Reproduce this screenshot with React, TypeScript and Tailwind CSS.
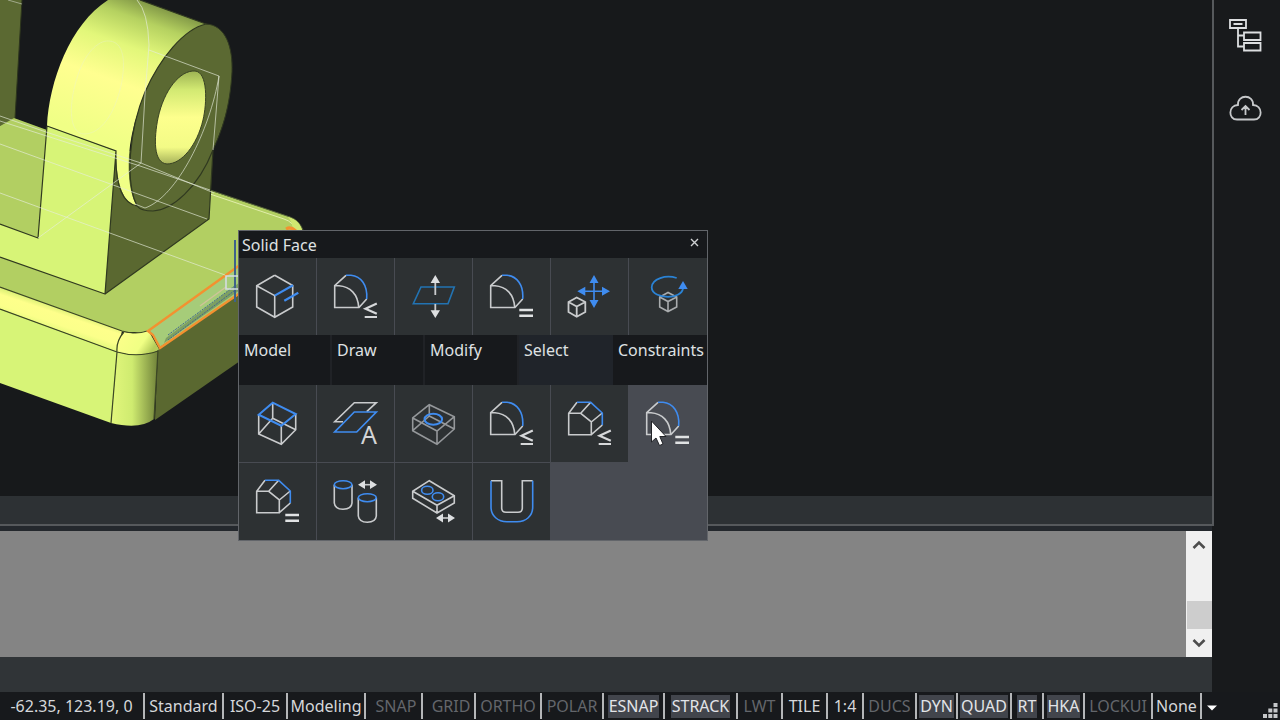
import type { ReactNode } from "react";

const BLUE = "#3f8cf0";
const GREY = "#c9cbcd";

function Icon({ children }: { children: ReactNode }) {
  return (
    <svg viewBox="0 0 76 76" className="size-[76px]" fill="none" stroke={GREY} strokeWidth="1.6" aria-hidden="true">
      {children}
    </svg>
  );
}

const LessEqual = () => <path d="M59.8 45.5 48.5 50.7 59.8 55.8M47.7 59H60" strokeWidth="2.2" stroke="#d6d8da" />;
const Equal = () => <path d="M46.3 52H60M46.3 57.8H60" strokeWidth="2.6" stroke="#e0e2e3" />;

function Fillet({ children }: { children?: ReactNode }) {
  return (
    <Icon>
      <path d="M29 17.3 17.7 27.7V49.5H42L49.7 41M17.7 27.7H22C33 28.5 41 36 41.7 49.5" />
      <path d="M29 17.3H34C44 18.3 50.8 27 49.7 41" stroke={BLUE} />
      {children}
    </Icon>
  );
}

function Chamfer({ children }: { children?: ReactNode }) {
  return (
    <Icon>
      <path d="M26 17.3 17.7 28.3V49.7H40.3V37L29.7 28.3H17.7M29.7 28.3 39.7 17.3M40.3 37 51.3 28M40.3 49.7 51.3 40" />
      <path d="M26 17.3H39.7L51.3 28V40" stroke={BLUE} />
      {children}
    </Icon>
  );
}

const topTools = [
  {
    name: "Select edge",
    icon: (
      <Icon>
        <path d="M35.7 17.3 17.7 27.7V49L35.7 59.3 53.7 49V27.5L35.7 17.3M17.7 27.7 35.7 37.6V59.3" />
        <path d="M35.7 37.6 54 27.2M45.3 42.7 59.3 34.8" stroke={BLUE} strokeWidth="2.2" />
      </Icon>
    ),
  },
  { name: "Fillets up to radius", icon: <Fillet><LessEqual /></Fillet> },
  {
    name: "Push and pull face",
    icon: (
      <Icon>
        <path d="M26 29H59.3L53 45.7H18.3Z" stroke="#2273b2" />
        <path d="M40.3 24V37M40.3 46V53" strokeWidth="1.8" />
        <path d="M40.3 17 45 25H35.6ZM40.3 60 45 52.3H35.6Z" fill="#dddfe1" stroke="none" />
      </Icon>
    ),
  },
  { name: "Fillets of equal radius", icon: <Fillet><Equal /></Fillet> },
  {
    name: "Move",
    icon: (
      <Icon>
        <path d="M25.7 39.5 17.5 44V54L25.7 58.7 34.3 54V44ZM17.5 44 25.7 48.5 34.3 44M25.7 48.5V58.7" strokeWidth="1.8" />
        <path d="M43 23V44M32 33.3H53" stroke={BLUE} strokeWidth="1.6" />
        <path d="M43 17 47.5 25H38.5ZM43 50 47.5 42H38.5ZM26.3 33.3 34.3 28.8V37.8ZM59 33.3 51 28.8V37.8Z" fill={BLUE} stroke="none" />
      </Icon>
    ),
  },
  {
    name: "Rotate",
    icon: (
      <Icon>
        <path d="M39 34.5 30.7 39V49L39 53.5 47.7 49V39ZM30.7 39 39 43.5 47.7 39M39 43.5V53.5" stroke="#a9acae" />
        <path d="M47.7 20C37 16.5 23 20.5 22.7 29.3C22.8 36 31 38.8 39 38.8C46 38.8 53 36 54 30.5" stroke="#2a82d4" strokeWidth="1.8" />
        <path d="M54 23 58.7 31H49.3Z" fill={BLUE} stroke="none" />
      </Icon>
    ),
  },
];

const tabs = [
  { label: "Model", width: "w-[93px]" },
  { label: "Draw", width: "w-[93px]" },
  { label: "Modify", width: "w-[94px]" },
  { label: "Select", width: "w-[94px]" },
  { label: "Constraints", width: "flex-1" },
];

const selectTools = [
  {
    name: "Box faces",
    icon: (
      <Icon>
        <path d="M33.7 17.7V33.3L19.7 49M33.7 33.3 56.7 44.7M19.7 29.7V49L42.3 59.3 56.7 44.7V29M42.3 40.7V59.3" />
        <path d="M33.7 17.7 19.7 29.7 42.3 40.7 56.7 29Z" stroke={BLUE} strokeWidth="2" />
      </Icon>
    ),
  },
  {
    name: "Aligned faces",
    icon: (
      <Icon>
        <path d="M26 36.7H17.7L37.3 17.7H59.3L49.7 26.7" />
        <path d="M37.3 27H59.3L39.7 47H17.7Z" stroke={BLUE} strokeWidth="1.7" />
        <text x="44" y="59.3" fontSize="25" fill="#d3d5d7" stroke="none" fontFamily="'Noto Sans', sans-serif">A</text>
      </Icon>
    ),
  },
  {
    name: "Holes",
    icon: (
      <Icon>
        <path d="M34.3 19.7 17.7 33V45.7L42 59.3 59.3 44V31.7ZM17.7 33 42 46 59.3 31.7M42 46V59.3M34.3 19.7V31L17.7 45.7M34.3 31 59.3 44" stroke="#94979a" />
        <ellipse cx="38.3" cy="34.3" rx="8.8" ry="5.5" stroke={BLUE} strokeWidth="2" />
      </Icon>
    ),
  },
  { name: "Fillets up to radius", icon: <Fillet><LessEqual /></Fillet> },
  { name: "Chamfers up to size", icon: <Chamfer><LessEqual /></Chamfer> },
  { name: "Fillets of equal radius", icon: <Fillet><Equal /></Fillet>, hovered: true },
  { name: "Chamfers of equal size", icon: <Chamfer><Equal /></Chamfer> },
  {
    name: "Similar bosses",
    icon: (
      <Icon>
        <path d="M17.3 21.7V40Q18 46 26 46.3Q34.5 46 35 40V21.7M41.3 34.7V53Q42 59 50.3 59.3Q58.8 59 59.3 53V34.7" />
        <ellipse cx="26.1" cy="21.7" rx="8.8" ry="4" stroke={BLUE} />
        <ellipse cx="50.3" cy="34.7" rx="9" ry="4" stroke={BLUE} />
        <path d="M45 21.7H56" />
        <path d="M41 21.7 48 17.3V26ZM60 21.7 53 17.3V26Z" fill="#dddfe1" stroke="none" />
      </Icon>
    ),
  },
  {
    name: "Similar holes",
    icon: (
      <Icon>
        <path d="M34.3 17.7 17.7 28.3V35.3L42 50 59.3 40V32.7ZM17.7 28.3 42 42.3 59.3 32.7M42 42.3V50" />
        <ellipse cx="32.3" cy="27.3" rx="5.7" ry="4" stroke={BLUE} />
        <ellipse cx="43" cy="33.7" rx="5.7" ry="4" stroke={BLUE} />
        <path d="M45 55H56" />
        <path d="M41 55 48 50.6V59.4ZM60 55 53 50.6V59.4Z" fill="#dddfe1" stroke="none" />
      </Icon>
    ),
  },
  {
    name: "Pockets",
    icon: (
      <Icon>
        <path d="M18 17.7H28.7V45Q28.7 49.3 33 49.3H45Q49.3 49.3 49.3 45V17.7H59.7" />
        <path d="M18 17.7V44C18 53 25 58.7 34 58.7H44C53 58.7 59.7 53 59.7 44V17.7" stroke={BLUE} />
      </Icon>
    ),
  },
];

type Mode = "text" | "off" | "on";

const statusItems: { label: string; mode: Mode; width: string }[] = [
  { label: "-62.35, 123.19, 0", mode: "text", width: "w-[145px]" },
  { label: "Standard", mode: "text", width: "w-[79px]" },
  { label: "ISO-25", mode: "text", width: "w-16" },
  { label: "Modeling", mode: "text", width: "w-[78px]" },
  { label: "SNAP", mode: "off", width: "w-[57px] pl-[5px]" },
  { label: "GRID", mode: "off", width: "w-[53px] pl-[5px]" },
  { label: "ORTHO", mode: "off", width: "w-[66px]" },
  { label: "POLAR", mode: "off", width: "w-[62px]" },
  { label: "ESNAP", mode: "on", width: "w-[61px]" },
  { label: "STRACK", mode: "on", width: "w-[73px]" },
  { label: "LWT", mode: "off", width: "w-[45px]" },
  { label: "TILE", mode: "text", width: "w-[45px]" },
  { label: "1:4", mode: "text", width: "w-9" },
  { label: "DUCS", mode: "off", width: "w-[53px]" },
  { label: "DYN", mode: "on", width: "w-[41px]" },
  { label: "QUAD", mode: "on", width: "w-[54px]" },
  { label: "RT", mode: "on", width: "w-8" },
  { label: "HKA", mode: "on", width: "w-[41px]" },
  { label: "LOCKUI", mode: "off", width: "w-[68px]" },
  { label: "None", mode: "text", width: "w-[49px]" },
];

const modeStyles: Record<Mode, string> = {
  text: "text-[#d5d7da]",
  off: "text-[#63666b]",
  on: "bg-[#42454c] text-[#e2e4e8]",
};

function Model() {
  return (
    <svg viewBox="0 0 310 440" className="h-[440px] w-[310px]" fill="none" role="img" aria-label="Solid bracket model">
      <defs>
        <linearGradient id="drum" gradientUnits="userSpaceOnUse" x1="172" y1="10" x2="124" y2="145">
          <stop offset="0" stopColor="#7f9545" />
          <stop offset=".14" stopColor="#b5d160" />
          <stop offset=".34" stopColor="#e2f77a" />
          <stop offset=".6" stopColor="#ffff90" />
          <stop offset="1" stopColor="#f0ff86" />
        </linearGradient>
        <linearGradient id="bore" x1="0" y1="0" x2="0" y2="1">
          <stop offset="0" stopColor="#9db353" />
          <stop offset=".2" stopColor="#d2e972" />
          <stop offset=".5" stopColor="#fdff8d" />
          <stop offset=".82" stopColor="#f3fb86" />
          <stop offset="1" stopColor="#a6b25a" />
        </linearGradient>
        <linearGradient id="bevel" gradientUnits="userSpaceOnUse" x1="62" y1="307" x2="54" y2="331">
          <stop offset="0" stopColor="#d3ec70" />
          <stop offset=".3" stopColor="#feff8b" />
          <stop offset=".7" stopColor="#fbff8a" />
          <stop offset="1" stopColor="#e4f97c" />
        </linearGradient>
        <linearGradient id="corner" x1="0" y1="0" x2="1" y2="0">
          <stop offset="0" stopColor="#e2f77c" />
          <stop offset=".45" stopColor="#cfeb70" />
          <stop offset="1" stopColor="#6f8139" />
        </linearGradient>
        <linearGradient id="ball" x1="0" y1="0" x2="1" y2=".4">
          <stop offset="0" stopColor="#feff8b" />
          <stop offset=".7" stopColor="#f0ff84" />
          <stop offset="1" stopColor="#b4cc5a" />
        </linearGradient>
      </defs>

      <path d="M0 0H22L15 118 0 126Z" fill="#5b6932" />
      <path d="M22 0 15 118" stroke="#2d351d" />
      <path d="M8 0 22 4" stroke="#cfd3c4" strokeOpacity=".6" />

      <path d="M0 126 14 118 47 130 209 190 290 217Q302 222 303 234L240 290 150 332 124 332 0 290Z" fill="#b2cf62" />
      <path d="M210 190 290 217Q299 220 303 230" stroke="#56643a" />
      <path d="M210 194 284 219Q294 222 296 232" stroke="#ecf5bd" strokeOpacity=".8" />
      <path d="M288 217Q301 220 303 234H294Q293 223 288 217Z" fill="#cfe771" />

      <path d="M158 350 240 294V361L155 420Z" fill="#5a6830" />
      <path d="M0 287 122 331 117 352 0 309Z" fill="url(#bevel)" />
      <path d="M0 309 117 352 111 423 0 383Z" fill="#d7f477" />
      <path d="M117 352Q138 358 158 351L154 419Q140 430 111 423Z" fill="url(#corner)" />
      <path d="M124 332Q136 335 148 330L159 349 158 351Q138 358 117 352Q117 340 124 332Z" fill="url(#ball)" />
      <path d="M0 287 122 331Q136 335 147 331M0 309 117 352Q138 358 158 351M124 332Q116 341 117 352L111 423M158 350 154 419" stroke="#3c4725" strokeWidth="1.2" />

      <path d="M150 331 240 264V294L160 347Z" fill="#a6cc79" />
      <path d="M166 338 240 282V290L164 343Z" fill="#7d9f62" />
      <path d="M168 335 236 285M168 340 238 288" stroke="#41688f" strokeWidth="1" strokeDasharray="2 1" />
      <path d="M200 306 226 287" stroke="#cfc39a" strokeWidth="1.5" />
      <path d="M240 265 148 331 153 335 160 348 240 293" stroke="#f39130" strokeWidth="2.4" />
      <path d="M286 229Q291 226 296 231" stroke="#f39130" strokeWidth="3" />

      <path d="M47 126 116 151 105 294 0 257V224L38 238Z" fill="#d7f477" />
      <path d="M116 151H213L209 219 105 294Z" fill="#5a6830" />
      <path d="M47 126C49 82 70 24 108 0H140L206 24C160 60 134 100 129 155Q127 190 137 206C124 204 116 185 116 151Z" fill="url(#drum)" />
      <path d="M206 24C226 25 233 48 232 72C230 108 222 130 211 154C198 188 172 211 153 211Q141 211 137 206C125 182 129 130 145 92C160 58 184 29 206 24Z" fill="#5b6932" />
      <path d="M195 71C208 72 207 103 203 120C197 145 182 164 167 164C153 163 154 138 158 118C164 90 180 70 195 71Z" fill="url(#bore)" stroke="#3a4424" />
      <path d="M47 126 116 151 105 294 0 257M47 126 38 238 0 224M116 151C115 184 122 203 137 206M140 0 206 24C184 29 160 58 145 92C129 130 125 182 137 206Q141 211 153 211C172 210 198 188 213 150L209 219 105 294" stroke="#303920" strokeWidth="1.2" />
      <path d="M206 24C226 25 233 48 232 72C230 108 222 130 213 150" stroke="#303920" />

      <g stroke="#e7eddb" strokeOpacity=".65">
        <path d="M137 0Q148 12 149 45L145 95 141 163 38 238" />
        <path d="M149 50 219 76 213 150M219 76C210 130 177 197 145 208L135 204" />
        <path d="M0 116 46 132 141 163 214 193M0 121 140 166 210 190M0 144 207 219M0 193 225 275" />
        <path d="M109 41C127 42 125 70 120 90C112 120 98 134 84 134C68 133 69 103 77 78C84 54 98 40 109 41Z" strokeOpacity=".35" />
      </g>
      <path d="M235 240V302" stroke="#3e628b" strokeWidth="2" />
      <path d="M240 276H226V289H240" stroke="#d4dce1" strokeWidth="1.6" />
    </svg>
  );
}

function Palette() {
  return (
    <section aria-label="Solid Face" className="absolute top-[230px] left-[238px] w-[470px] border border-[#62656a] bg-[#17191c] text-base text-[#dfe1e3]">
      <header className="flex h-[27px] items-center justify-between pr-2 pl-[3px]">
        <h1>Solid Face</h1>
        <button type="button" aria-label="Close" className="flex h-5 items-start">
          <svg viewBox="0 0 9 9" className="mt-[3px] size-[9px]" stroke="#cfd1d3" strokeWidth="1.4" aria-hidden="true">
            <path d="M1 1 8 8M8 1 1 8" />
          </svg>
        </button>
      </header>
      <div className="grid grid-cols-6">
        {topTools.map((tool) => (
          <button key={tool.name} type="button" aria-label={tool.name} className="flex h-[77px] border-r border-[#484b52] bg-[#2d3133] last:border-r-0">
            {tool.icon}
          </button>
        ))}
      </div>
      <div role="tablist" className="flex h-[50px]">
        {tabs.map((tab) => (
          <button
            key={tab.label}
            type="button"
            role="tab"
            aria-selected={tab.label === "Select"}
            className={`flex items-start border-r-2 pt-[3px] pl-[5px] last:border-r-0 ${tab.width} ${
              tab.label === "Select" ? "border-[#20242a] bg-[#20242a]" : "border-[#202226]"
            }`}
          >
            {tab.label}
          </button>
        ))}
      </div>
      <div className="grid grid-cols-6 gap-y-px bg-[#484b52]">
        {selectTools.map((tool) => (
          <button
            key={tool.name}
            type="button"
            aria-label={tool.name}
            className={`flex h-[77px] border-r border-[#484b52] ${tool.hovered ? "bg-[#484b52]" : "bg-[#2d3133]"}`}
          >
            {tool.icon}
          </button>
        ))}
      </div>
      <svg viewBox="0 0 18 28" className="pointer-events-none absolute top-[189px] left-[411px] h-7 w-[18px]" aria-hidden="true">
        <path d="M1.5 1V22L6 18 9.5 25.5 13 24 9.8 16.5H16Z" fill="#fff" stroke="#222428" />
      </svg>
    </section>
  );
}

export default function App() {
  return (
    <div className="flex h-screen flex-col overflow-hidden bg-[#181a1c] font-['Noto_Sans',sans-serif]">
      <div className="flex min-h-0 flex-1">
        <main className="relative flex min-w-0 flex-1 flex-col">
          <div className="flex min-h-0 flex-1 flex-col border-r-2 border-b-2 border-[#56595c]">
            <div className="min-h-0 flex-1 overflow-hidden bg-[#17191b]">
              <Model />
            </div>
            <div className="h-7 bg-[#2d3134]" />
          </div>
          <div className="mr-[2px] h-[5px] bg-[#24282d]" />
          <div className="mr-[2px] flex h-[126px] bg-[#848484]">
            <div className="flex-1" />
            <div className="flex w-[26px] flex-col bg-[#f0f0f0]">
              <button type="button" aria-label="Scroll up" className="flex h-7 items-center justify-center">
                <svg viewBox="0 0 14 10" className="h-[10px] w-[14px]" fill="none" stroke="#4d4d4d" strokeWidth="2.6" aria-hidden="true">
                  <path d="M1.5 8 7 2.5 12.5 8" />
                </svg>
              </button>
              <div className="flex flex-1 flex-col justify-end pl-px">
                <div className="h-7 bg-[#cdcdcd]" />
              </div>
              <button type="button" aria-label="Scroll down" className="flex h-7 items-center justify-center">
                <svg viewBox="0 0 14 10" className="h-[10px] w-[14px]" fill="none" stroke="#4d4d4d" strokeWidth="2.6" aria-hidden="true">
                  <path d="M1.5 2 7 7.5 12.5 2" />
                </svg>
              </button>
            </div>
          </div>
          <div className="mr-[2px] h-[35px] bg-[#303437]" />
          <Palette />
        </main>
        <aside className="flex w-[66px] flex-col items-start gap-10 pt-[18px] pl-[14px]">
          <button type="button" aria-label="Structure">
            <svg viewBox="0 0 34 34" className="size-[34px]" fill="none" stroke="#dcdee0" strokeWidth="1.8" aria-hidden="true">
              <path d="M2 2H18V10H2ZM5.5 6H14.5M10 10V28.5H16M10 17.5H16M16 14.5H32.5V22H16ZM16 25H32.5V32.5H16Z" />
            </svg>
          </button>
          <button type="button" aria-label="Upload to cloud">
            <svg viewBox="0 0 34 34" className="size-[34px]" fill="none" stroke="#c6c8ca" strokeWidth="1.8" aria-hidden="true">
              <path d="M9 27.5C0 27.5 0 13.5 10 13C9 2 26 2 25 13C35 13.5 35 27.5 26 27.5ZM17.5 23V14.5M13.5 18 17.5 14 21.5 18" />
            </svg>
          </button>
        </aside>
      </div>
      <footer className="flex h-7 items-center bg-[#17191c] text-base">
        {statusItems.map((item) => (
          <div key={item.label} className={`flex h-[26px] shrink-0 items-center justify-center border-r-2 border-[#b4b6b8] ${item.width}`}>
            <button type="button" className={`h-[23px] px-px leading-[23px] whitespace-nowrap ${modeStyles[item.mode]}`}>
              {item.label}
            </button>
          </div>
        ))}
        <button type="button" aria-label="Status bar options" className="px-[5px]">
          <svg viewBox="0 0 10 6" className="mt-1 h-[6px] w-[10px]" fill="#fff" aria-hidden="true">
            <path d="M0 .5H10L5 5.5Z" />
          </svg>
        </button>
        <svg viewBox="0 0 15 15" className="mt-2 mr-[2px] ml-auto size-[15px]" fill="#c5c7c9" aria-hidden="true">
          <path d="M10.5 0H14.5V4H10.5ZM10.5 5.5H14.5V9.5H10.5ZM10.5 11H14.5V15H10.5ZM5.3 5.5H9.3V9.5H5.3ZM5.3 11H9.3V15H5.3ZM0 11H4V15H0Z" />
        </svg>
      </footer>
    </div>
  );
}
